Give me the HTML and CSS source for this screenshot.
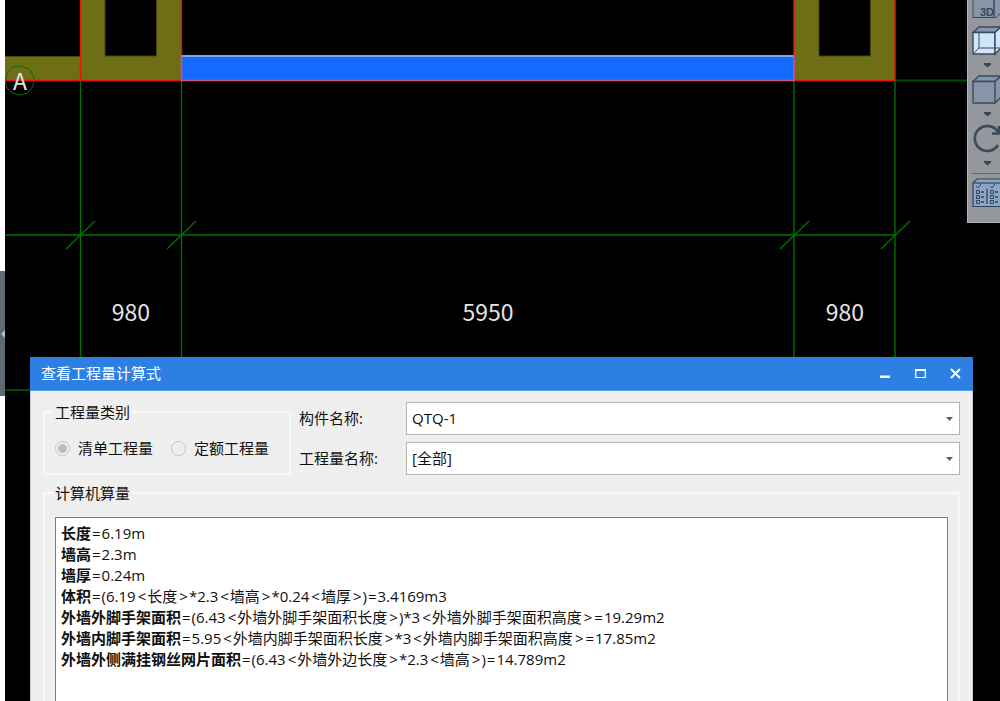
FILE: index.html
```html
<!DOCTYPE html>
<html lang="zh-CN">
<head>
<meta charset="utf-8">
<meta name="viewport" content="width=device-width, initial-scale=1">
<title>查看工程量计算式</title>
<link rel="stylesheet" href="styles.css">
</head>
<body>
<main class="workspace">
  <svg class="drawing" role="img" aria-label="平面图">
    <!-- walls -->
    <g fill="#6e6e16">
      <path d="M0 56H80V80H0z"/>
      <path d="M80 0H105V56H157V0H182V81H80z"/>
      <path d="M794 0H819V56H870V0H895V81H794z"/>
    </g>
    <g fill="none" stroke="#45450c">
      <path d="M0 56.5H80M105 0V56H156.5V0M819 0V56H870.5V0"/>
    </g>
    <!-- axis grid and dimension lines -->
    <g fill="none" stroke="#007000">
      <path d="M80.5 81V360M181.5 81V360M794 81V360M895 81V360" stroke-width="1.4"/>
      <path d="M0 235H895M66 249L95 221M167 249L196 221M780 249L809 221M881 249L910 221" stroke-width="1.4"/>
      <path d="M895 80.5H1000M0 390H31" stroke="#004a00" stroke-width="2"/>
      <path d="M20 66L29 69L34 77L33 86L28 93L20 95L12 93L7 88L5 80L8 71L13 67z"/>
    </g>
    <g fill="none" stroke="#e3160e" stroke-width="1.4">
      <path d="M5 80.5H181.5V0M80.5 0V80.5M794 0V80.5H895V0"/>
    </g>
    <!-- selected beam -->
    <path d="M182 55H794V81H182z" fill="#146aff"/>
    <path d="M182 56H794" stroke="#76a3f4" stroke-width="2"/>
    <path d="M182 80.5H794" stroke="#c9577f" stroke-width="1.6"/>
    <path d="M181.5 55V81M794 55V81" stroke="#c05a90" stroke-width="1.6"/>
    <g class="drawing-text">
      <text x="20" y="90">A</text>
      <text x="131" y="321">980</text>
      <text x="488" y="321">5950</text>
      <text x="845" y="321">980</text>
    </g>
  </svg>

  <aside class="rail">
    <button class="rail-handle" type="button" aria-label="收起">
      <svg width="5" height="10" viewBox="0 0 5 10"><path d="M5 1V9L1 5z" fill="#b9bec4"/></svg>
    </button>
  </aside>

  <nav class="tools" aria-label="视图工具">
    <button class="tool tool-first" type="button" aria-label="三维">
      <svg width="30" height="26" viewBox="0 0 30 26" fill="#8696a8" stroke="#3c4a5c">
        <path d="M1 -3H22V17.500H1zM22 -3H30V12L24 17.500H22z"/>
        <text class="tool-text" x="8" y="16">3D</text>
      </svg>
    </button>
    <button class="tool" type="button" aria-label="线框">
      <svg width="30" height="49" viewBox="0 0 30 49" fill="none" stroke="#3c4a5c" stroke-width="1.400">
        <path d="M1 6.500L7 1H29L23 6.500z" fill="#8696a8"/>
        <path d="M1 6.500H23V28H1z" fill="#cfe5fb"/>
        <path d="M23 6.500L29 1V22L23 28z" fill="#cfe5fb"/>
        <path d="M7 6.500V22H29M7 22L1 28" stroke-width="1"/>
        <path d="M12 37H19V38.500L15.500 41.500L12 38.500z" fill="#3c4652" stroke="none"/>
      </svg>
    </button>
    <button class="tool" type="button" aria-label="实体">
      <svg width="30" height="49" viewBox="0 0 30 49" fill="#8696a8" stroke="#3c4a5c" stroke-width="1.400">
        <path d="M1 6.500L7 1H29L23 6.500z"/>
        <path d="M1 6.500H23V28H1zM23 6.500L29 1V22L23 28z"/>
        <path d="M12 37H19V38.500L15.500 41.500L12 38.500z" fill="#3c4652" stroke="none"/>
      </svg>
    </button>
    <button class="tool" type="button" aria-label="旋转">
      <svg width="30" height="49" viewBox="0 0 30 49" fill="none" stroke="#3c4a5c">
        <path d="M26 8A12.500 12.500 0 1 0 26 21" stroke-width="2.600"/>
        <path d="M27 2V9.500H20" stroke-width="2.600"/>
        <path d="M12 37H19V38.500L15.500 41.500L12 38.500z" fill="#3c4652" stroke="none"/>
      </svg>
    </button>
    <hr class="tool-rule">
    <button class="tool" type="button" aria-label="显示设置">
      <svg width="30" height="34" viewBox="0 0 30 34" fill="none" stroke="#34435a">
        <path d="M1 5L5 1H30V28.500H1z" fill="#8ba5c6" stroke-width="1.200"/>
        <path d="M1 5H30" stroke-width="1.200"/>
        <path d="M4 8L6 10L9 6M18 8L20 10L23 6"/>
        <path d="M4.500 12.500H7.500V15.500H4.500zM4.500 17.500H7.500V20.500H4.500zM4.500 22.500H7.500V25.500H4.500zM18.500 12.500H21.500V15.500H18.500zM18.500 17.500H21.500V20.500H18.500zM18.500 22.500H21.500V25.500H18.500z"/>
        <path d="M9 14H12M9 19H12M9 24H12M23 14H26M23 19H26M23 24H26M15 11V26" stroke-width="1.300"/>
      </svg>
    </button>
  </nav>

  <section class="dialog" role="dialog" aria-labelledby="dialog-title">
    <header class="titlebar">
      <h1 class="title" id="dialog-title">查看工程量计算式</h1>
      <button class="win-button" type="button" aria-label="最小化">
        <svg width="11" height="11" viewBox="0 0 11 11"><path d="M0 7.500H10V10H0z" fill="#fff"/></svg>
      </button>
      <button class="win-button" type="button" aria-label="最大化">
        <svg width="11" height="11" viewBox="0 0 11 11" fill="none" stroke="#fff"><path d="M.7 1.500H10.300V9.500H.7z" stroke-width="1.200"/><path d="M0 2H11" stroke-width="2"/></svg>
      </button>
      <button class="win-button" type="button" aria-label="关闭">
        <svg width="11" height="11" viewBox="0 0 11 11" fill="none" stroke="#fff"><path d="M1 1L10 10M10 1L1 10" stroke-width="1.900"/></svg>
      </button>
    </header>

    <div class="content">
      <div class="filters">
        <fieldset class="group">
          <legend class="legend">工程量类别</legend>
          <div class="radios">
            <label class="radio-label"><input class="radio" type="radio" name="kind" checked disabled>清单工程量</label>
            <label class="radio-label"><input class="radio" type="radio" name="kind" disabled>定额工程量</label>
          </div>
        </fieldset>
        <div class="fields">
          <label for="component">构件名称:</label>
          <div class="select-box">
            <select class="select" id="component"><option>QTQ-1</option></select>
            <svg class="caret" width="7" height="4" viewBox="0 0 7 4"><path d="M0 0H7L3.500 4z" fill="#606060"/></svg>
          </div>
          <label for="quantity">工程量名称:</label>
          <div class="select-box">
            <select class="select" id="quantity"><option>[全部]</option></select>
            <svg class="caret" width="7" height="4" viewBox="0 0 7 4"><path d="M0 0H7L3.500 4z" fill="#606060"/></svg>
          </div>
        </div>
      </div>

      <fieldset class="group group-result">
        <legend class="legend">计算机算量</legend>
        <div class="result">
          <p><b>长度</b><i class="eq">=</i>6.19m</p>
          <p><b>墙高</b><i class="eq">=</i>2.3m</p>
          <p><b>墙厚</b><i class="eq">=</i>0.24m</p>
          <p><b>体积</b><i class="eq">=</i>(6.19<i class="angle">&lt;</i>长度<i class="angle">&gt;</i>*2.3<i class="angle">&lt;</i>墙高<i class="angle">&gt;</i>*0.24<i class="angle">&lt;</i>墙厚<i class="angle">&gt;</i>)<i class="eq">=</i>3.4169m3</p>
          <p><b>外墙外脚手架面积</b><i class="eq">=</i>(6.43<i class="angle">&lt;</i>外墙外脚手架面积长度<i class="angle">&gt;</i>)*3<i class="angle">&lt;</i>外墙外脚手架面积高度<i class="angle">&gt;</i><i class="eq">=</i>19.29m2</p>
          <p><b>外墙内脚手架面积</b><i class="eq">=</i>5.95<i class="angle">&lt;</i>外墙内脚手架面积长度<i class="angle">&gt;</i>*3<i class="angle">&lt;</i>外墙内脚手架面积高度<i class="angle">&gt;</i><i class="eq">=</i>17.85m2</p>
          <p><b>外墙外侧满挂钢丝网片面积</b><i class="eq">=</i>(6.43<i class="angle">&lt;</i>外墙外边长度<i class="angle">&gt;</i>*2.3<i class="angle">&lt;</i>墙高<i class="angle">&gt;</i>)<i class="eq">=</i>14.789m2</p>
        </div>
      </fieldset>
    </div>
  </section>
</main>
</body>
</html>
```

FILE: styles.css
```css
* {
  box-sizing: border-box;
}

body {
  margin: 0;
  color: #111;
  font: 15px/21px "Open Sans", "Noto Sans CJK SC", sans-serif;
}

button {
  padding: 0;
  border: 0;
  background: none;
  cursor: pointer;
}

svg {
  display: block;
}

.workspace {
  position: relative;
  display: flex;
  justify-content: space-between;
  align-items: flex-start;
  height: 100vh;
  overflow: hidden;
  background: #000;
}

.drawing {
  position: absolute;
  inset: 0;
  width: 100%;
  height: 100%;
}

.drawing-text {
  fill: #e4e4e4;
  font-family: "Noto Sans CJK SC", sans-serif;
  font-size: 23px;
  text-anchor: middle;
}

/* Collapsed side panel */
.rail {
  position: relative;
  width: 5px;
  height: 100%;
  padding-top: 271px;
  background: #fff;
}

.rail-handle {
  display: flex;
  align-items: center;
  width: 100%;
  height: 125px;
  background: #5f6973;
}

/* View tools */
.tools {
  position: relative;
  width: 33px;
  padding: 0 0 10px 4px;
  overflow: hidden;
  border-left: 1px solid #b0b2b5;
  border-bottom: 1px solid #b0b2b5;
  background: #94979c;
}

.tool {
  display: block;
}

.tool-text {
  fill: #3c4652;
  stroke: none;
  font: bold 11px "Liberation Sans", sans-serif;
}

.tool-rule {
  margin: 0 0 4px;
  border: 0;
  border-top: 1px solid #65676a;
}

/* Dialog */
.dialog {
  position: absolute;
  top: 357px;
  right: 27px;
  bottom: 0;
  left: 30px;
  display: flex;
  flex-direction: column;
  background: #efefef;
}

.titlebar {
  display: flex;
  align-items: center;
  gap: 24px;
  height: 34px;
  padding: 0 12px 0 11px;
  border-bottom: 1px solid #5c9dec;
  background: #2d7fe1;
  color: #fff;
}

.title {
  flex: 1;
  margin: 0;
  font: inherit;
}

.content {
  display: flex;
  flex: 1;
  flex-direction: column;
  gap: 8px;
  padding: 11px 12px 0;
  border: solid #c3ccd8;
  border-width: 0 1px;
}

.filters {
  display: flex;
  gap: 8px;
}

.group {
  min-width: 0;
  margin: 0;
  padding: 0 10px;
  border: 2px solid #f8f8f8;
}

.legend {
  padding: 0 2px;
  margin-left: -2px;
  line-height: 20px;
}

.radios {
  display: flex;
  gap: 18px;
  align-items: center;
  height: 50px;
  padding: 2px 10px 0 0;
}

.radio-label {
  display: flex;
  align-items: center;
  gap: 8px;
  white-space: nowrap;
}

.radio {
  width: 15px;
  height: 15px;
  margin: 0;
  border: 1px solid #c4c4c4;
  border-radius: 50%;
  appearance: none;
}

.radio:checked {
  background: radial-gradient(circle, #bdbdbd 4px, transparent 5px);
}

.fields {
  display: grid;
  flex: 1;
  grid-template-columns: 107px 1fr;
  row-gap: 7px;
  align-items: center;
}

.select-box {
  position: relative;
}

.select {
  width: 100%;
  height: 33px;
  padding: 0 24px 0 5px;
  border: 1px solid #b4b4b4;
  border-radius: 0;
  background: #fff;
  color: inherit;
  font: inherit;
  appearance: none;
}

.caret {
  position: absolute;
  top: 15px;
  right: 7px;
  pointer-events: none;
}

.group-result {
  display: flex;
  flex: 1;
  flex-direction: column;
  padding-top: 14px;
  border-bottom: 0;
}

.result {
  flex: 1;
  padding: 5px;
  border: 1px solid #7c7c7c;
  border-bottom: 0;
  background: #fff;
}

.result p {
  margin: 0;
}

.eq,
.angle {
  padding: 0 1px;
  font-style: normal;
}

.angle {
  padding-left: 2px;
}
```
